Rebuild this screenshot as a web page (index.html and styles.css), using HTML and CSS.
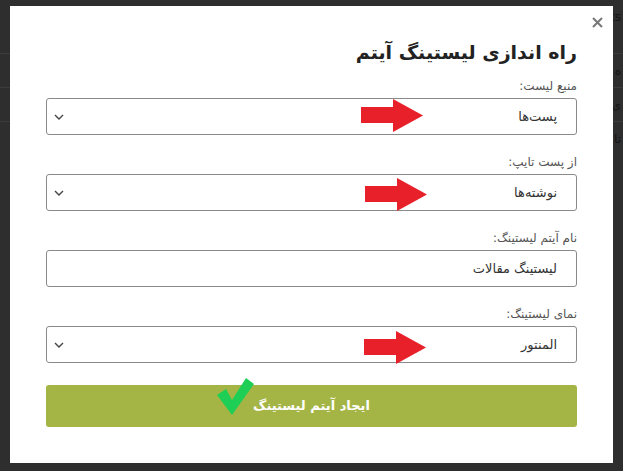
FILE: index.html
```html
<!DOCTYPE html>
<html lang="fa">
<head>
    <meta charset="UTF-8">
    <title>راه اندازی لیستینگ آیتم</title>
    <link rel="stylesheet" href="styles.css">
</head>
<body>

<div class="page">
    <div class="page-row row-top"><span class="peek">ts</span></div>
    <div class="page-row"><span class="peek">ه</span></div>
    <div class="page-row"><span class="peek">ى</span></div>
    <div class="page-row row-tall"><span class="peek">تا</span></div>
</div>

<div class="modal" dir="rtl">
    <svg class="close" width="11" height="11" viewBox="0 0 11 11"><path d="M1 1 L10 10 M10 1 L1 10" stroke="#777" stroke-width="2"/></svg>
    <h2 class="modal-title">راه اندازی لیستینگ آیتم</h2>

    <div class="field">
        <label class="field-label">منبع لیست:</label>
        <div class="select">
            <span>پست‌ها</span>
            <svg class="chevron" width="10" height="6" viewBox="0 0 10 6"><path d="M1 1 L5 5 L9 1" fill="none" stroke="#444" stroke-width="1.4"/></svg>
        </div>
    </div>

    <div class="field">
        <label class="field-label">از پست تایپ:</label>
        <div class="select">
            <span>نوشته‌ها</span>
            <svg class="chevron" width="10" height="6" viewBox="0 0 10 6"><path d="M1 1 L5 5 L9 1" fill="none" stroke="#444" stroke-width="1.4"/></svg>
        </div>
    </div>

    <div class="field">
        <label class="field-label">نام آیتم لیستینگ:</label>
        <div class="select">
            <span>لیستینگ مقالات</span>
        </div>
    </div>

    <div class="field">
        <label class="field-label">نمای لیستینگ:</label>
        <div class="select">
            <span>المنتور</span>
            <svg class="chevron" width="10" height="6" viewBox="0 0 10 6"><path d="M1 1 L5 5 L9 1" fill="none" stroke="#444" stroke-width="1.4"/></svg>
        </div>
    </div>

    <div class="submit">ایجاد آیتم لیستینگ</div>

    <!-- فلش‌ها و تیک روی تصویر -->
    <svg class="arrow arrow-1" width="62" height="33" viewBox="0 0 62 33"><polygon points="0,8 32,8 32,0 62,16.5 32,33 32,24 0,24" fill="#e8202a"/></svg>
    <svg class="arrow arrow-2" width="62" height="33" viewBox="0 0 62 33"><polygon points="0,8 32,8 32,0 62,16.5 32,33 32,24 0,24" fill="#e8202a"/></svg>
    <svg class="arrow arrow-3" width="62" height="33" viewBox="0 0 62 33"><polygon points="0,8 32,8 32,0 62,16.5 32,33 32,24 0,24" fill="#e8202a"/></svg>
    <svg class="check" width="38" height="38" viewBox="0 0 38 38"><polygon points="0,17 9,11 15,22 29,0 37,6 15,37" fill="#1fcf55"/></svg>
</div>

</body>
</html>
```

FILE: styles.css
```css
body {
    margin: 0;
    background-color: #2e2e2e;
    font-family: "DejaVu Sans", "Noto Sans", sans-serif;
    height: 471px;
    overflow: hidden;
}

.page-row {
    height: 33px;
    border-bottom: 1px solid #3c3c3c;
    text-align: right;
    padding-right: 2px;
}

.row-top {
    height: 53px;
}

.row-tall {
    height: 110px;
    border-bottom: none;
}

.peek {
    display: inline-block;
    margin-top: 10px;
    font-size: 12px;
    color: #151515;
}

.modal {
    position: absolute;
    top: 6px;
    left: 10px;
    width: 531px;
    height: 422px;
    padding: 35px 36px 0 36px;
    background-color: #ffffff;
}

.close {
    position: absolute;
    top: 11px;
    right: 10px;
}

.modal-title {
    margin: 0 0 14px 0;
    font-size: 19px;
    line-height: 22px;
    font-weight: bold;
    color: #222;
}

.field {
    margin-bottom: 18px;
}

.field-label {
    display: block;
    font-size: 12px;
    line-height: 18px;
    margin-bottom: 3px;
    color: #555;
}

.select {
    display: flex;
    justify-content: space-between;
    align-items: center;
    height: 35px;
    padding: 0 19px 0 7px;
    border: 1px solid #8a8a8a;
    border-radius: 3px;
    font-size: 13px;
    color: #333;
}

.chevron {
    display: block;
}

.submit {
    margin-top: 22px;
    height: 42px;
    line-height: 42px;
    border-radius: 3px;
    background-color: #a5b545;
    color: #ffffff;
    font-size: 13px;
    font-weight: bold;
    text-align: center;
}

.arrow {
    position: absolute;
}

.arrow-1 {
    left: 351px;
    top: 93px;
}

.arrow-2 {
    left: 355px;
    top: 172px;
}

.arrow-3 {
    left: 354px;
    top: 325px;
}

.check {
    position: absolute;
    left: 207px;
    top: 372px;
}
```
